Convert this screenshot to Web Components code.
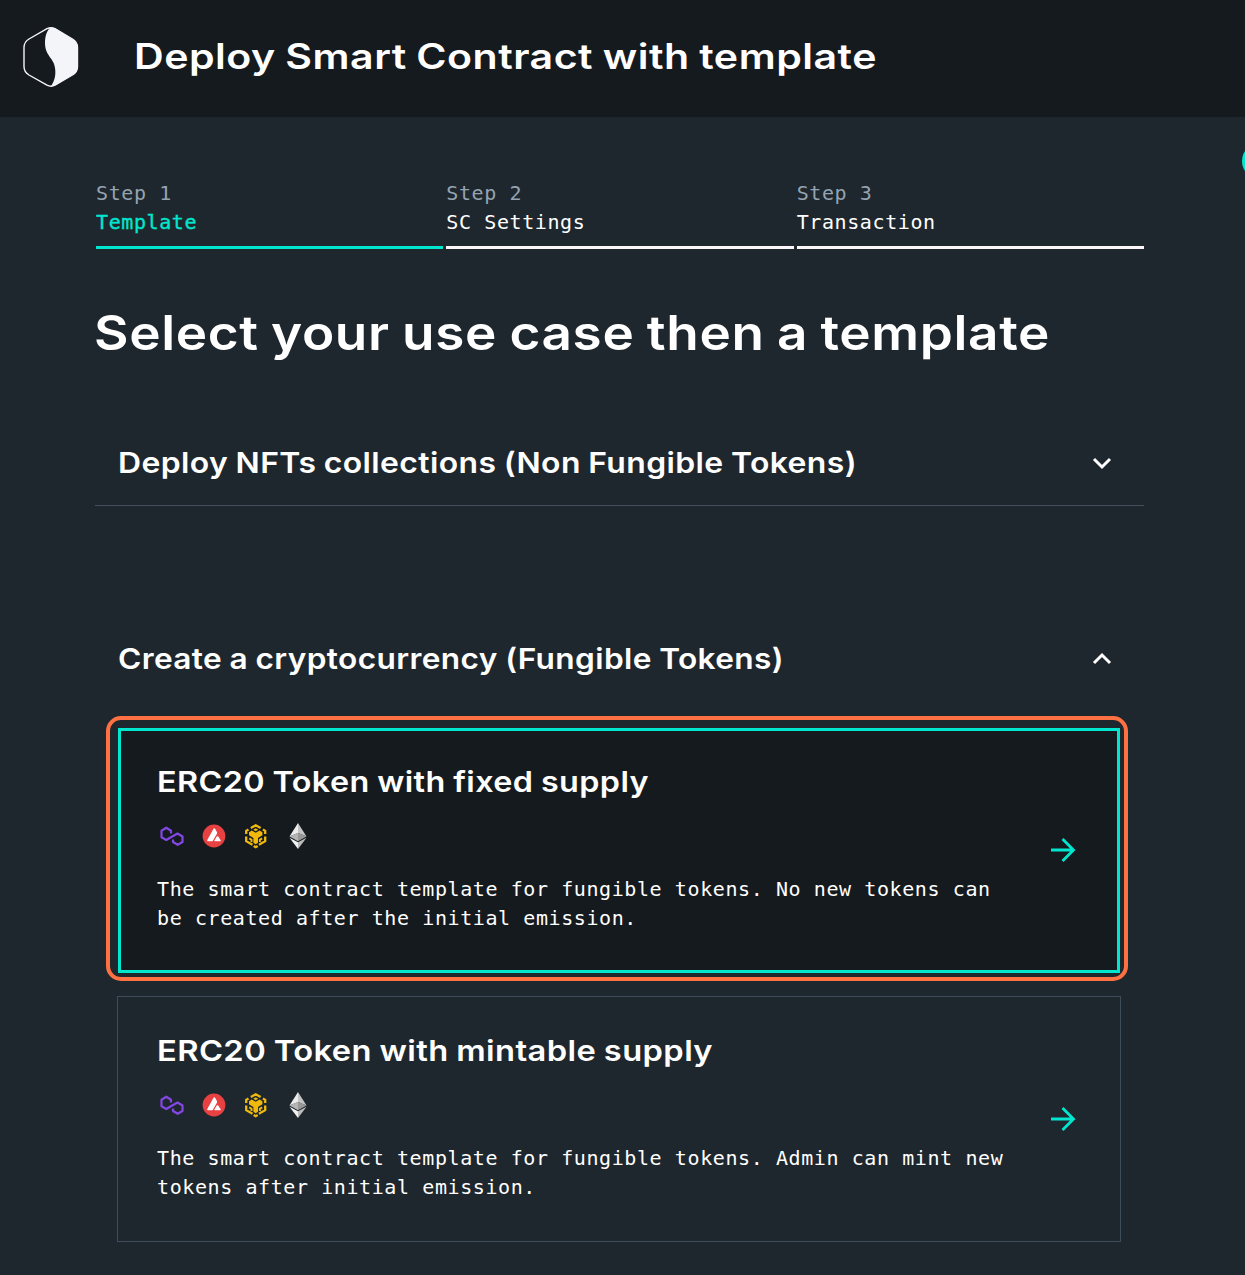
<!DOCTYPE html>
<html lang="en">
<head>
<meta charset="utf-8">
<title>Deploy Smart Contract with template</title>
<style>
html,body{margin:0;height:100%;overflow:hidden;background:#1f272e}
body{color:#fff;font-family:"DejaVu Sans Mono",monospace;font-size:20px}
</style>
</head>
<body>
<deploy-app></deploy-app>
<script>
const define=(name,html,init)=>customElements.define(name,class extends HTMLElement{
  connectedCallback(){
    if(this.shadowRoot)return;
    const t=document.createElement('template');
    t.innerHTML=html(this);
    this.attachShadow({mode:'open'}).append(t.content.cloneNode(true));
    if(init)init(this);
  }
});

/* Heading whose letters are widened so the line spans a given measure. */
define('fit-title',e=>`<style>
:host{display:block;font:600 ${e.getAttribute('size')}px/1.25 Inter,"Liberation Sans",sans-serif;white-space:nowrap;color:#fff}
span{display:inline-block;transform-origin:0 50%;letter-spacing:.012em;word-spacing:-.03em}
</style><span>${e.getAttribute('text')}</span>`,e=>{
  const s=e.shadowRoot.querySelector('span');
  const k=Number(e.getAttribute('measure'))/s.getBoundingClientRect().width;
  s.style.transform='scaleX('+k.toFixed(4)+')';
});

define('brand-mark',()=>`<style>:host{display:block;width:56px;height:62px}svg{display:block}</style>
<svg width="56" height="62" viewBox="0 0 56 62" fill="none">
<path d="M24 2.600 6 13Q1 16 1 21.500V40.500Q1 46 6 49L24 59.200Q28 61.300 32 59.200L49.500 49Q54.500 46 54.500 40.500V21.500Q54.500 16 49.500 13L32 2.600Q28 .8 24 2.600Z" stroke="#f4f5f8" stroke-width="1.400"/>
<path d="M27 2Q30 1.300 33 3L49.500 13Q55 16 55 21.500V40.500Q55 46 49.500 49L32 59.500Q30 60.500 28 60.200C32 54.500 33 48 32 42C31 32 22 30 22 17C22 10 24 4.500 27 2Z" fill="#f4f5f8"/></svg>`);

define('app-bar',()=>`<style>
:host{display:flex;align-items:flex-start;box-sizing:border-box;height:117px;padding:26px 23px 0;gap:55px;background:#151a1e}
fit-title{margin-top:9px}
</style><brand-mark></brand-mark><fit-title size="35" measure="743" text="Deploy Smart Contract with template"></fit-title>`);

define('step-tab',e=>`<style>
:host{display:block;flex:1;border-bottom:3px solid #fcf5fa;padding-bottom:9px;line-height:29px;letter-spacing:.6px}
:host([active]){border-color:#00e6cf}
.n{color:#94a3b1;padding-top:1px}:host([active]) .l{color:#00e6cf;-webkit-text-stroke:.35px #00e6cf}
</style><div class="n">${e.getAttribute('step')}</div><div class="l"><slot></slot></div>`);

define('step-bar',()=>`<style>:host{display:flex;gap:3px;margin-left:1px}</style>
<step-tab active step="Step 1">Template</step-tab><step-tab step="Step 2">SC Settings</step-tab><step-tab step="Step 3">Transaction</step-tab>`);

define('accordion-head',e=>`<style>
:host{display:flex;align-items:center;justify-content:space-between;box-sizing:border-box;height:84px;padding:0 32px 0 23px;border-bottom:1px solid transparent}
:host([line]){border-color:#43505c}
svg{display:block;margin-bottom:2px}
:host([open]) svg{transform:scaleY(-1)}
</style><fit-title size="29" measure="${e.getAttribute('measure')}" text="${e.getAttribute('text')}"></fit-title>
<svg width="20" height="14" viewBox="0 0 20 14"><path d="M2 3 10 11 18 3" fill="none" stroke="#fff" stroke-width="3"/></svg>`);

define('chain-icons',()=>`<style>:host{display:flex;gap:14px;height:28px}svg{display:block;width:28px;height:28px}</style>
<svg viewBox="0 0 28 28" fill="none" stroke="#8247e5" stroke-width="2.200" stroke-linejoin="round"><path d="M12 15.700 8.300 18 3.500 15.300V8.700L8.300 5.700 13 8.700V11.500M12 15.700 19.500 11.500 24.500 14.500V20L19.700 22.800 15 20V17.500"/></svg>
<svg viewBox="0 0 28 28"><circle cx="14" cy="14" r="11.400" fill="#e84142"/><path d="M13.500 6.800Q14.300 5.700 15.100 6.800L17 10.200Q17.300 11 16.900 11.700L12.900 18.700Q12.500 19.300 11.700 19.300H8Q6.700 19.200 7.300 18ZM16.800 14.500Q17.500 13.600 18.200 14.500L20.700 18.200Q21.200 19.200 20.100 19.300H15.200Q13.900 19.200 14.500 18.200Z" fill="#fff"/></svg>
<svg viewBox="0 0 28 28" fill="none" stroke="#f0b90b"><path d="M8.800 6 13.700 3.300 18.600 6M4.200 12V8.800L6.500 7.400M20.900 7.400 23.200 8.800V12M4.200 14.500V19.200L10.500 22.800M16.900 22.800 23.200 19.200V14.500M11.700 24 13.700 25.200 15.700 24" stroke-width="2.300"/><path d="M7.300 16.300 9.500 17.700V20M20.100 16.300 17.900 17.700V20" stroke-width="2"/><path d="M7 10.200 9.800 8.600 13.700 10.800 17.600 8.600 20.400 10.200V13.300L16 16V20.800L13.700 22.200 11.400 20.800V16L7 13.300ZM11.200 7.800 13.700 6.300 16.200 7.800 13.700 9.200Z" fill="#f0b90b" stroke="none"/></svg>
<svg viewBox="0 0 28 28"><path d="M14 1 5.500 14.500 14 11Z" fill="#ececec"/><path d="M14 1V11L22.500 14.500Z" fill="#c4c4c4"/><path d="M5.500 14.500 14 10.700V19.300Z" fill="#b4b4b4"/><path d="M22.500 14.500 14 10.700V19.300Z" fill="#989898"/><path d="M5.500 15.800 14 20.200V27Z" fill="#f0f0f0"/><path d="M22.500 15.800 14 20.200V27Z" fill="#bcbcbc"/></svg>`);

define('template-card',e=>`<style>
:host{display:block}
.card{box-sizing:border-box;height:246px;border:1px solid #3e4b58;padding:36px 43px 0 39px;display:flex;align-items:flex-start;justify-content:space-between}
:host([selected]) .ring{border:4px solid #ff7142;border-radius:15px;padding:8px 4px 4px 8px}
:host([selected]) .card{height:245px;border:3px solid #00e6cf;background:#151a1e;padding:33px 40px 0 36px}
.info{display:flex;flex-direction:column}
chain-icons{margin:22px 0 0 1px}
p{margin:25px 0 0;line-height:29px;letter-spacing:.59px;white-space:nowrap}
.arrow{display:block;margin-top:72px}
</style><div class="ring"><div class="card"><div class="info">
<fit-title size="29" measure="${e.getAttribute('measure')}" text="${e.getAttribute('text')}"></fit-title>
<chain-icons></chain-icons><p><slot></slot></p></div>
<svg class="arrow" width="28" height="28" viewBox="0 0 28 28"><path d="M2 14H25M13.500 3 24.500 14 13.500 25" fill="none" stroke="#00e6cf" stroke-width="2.800"/></svg>
</div></div>`);

define('help-bubble',()=>`<style>:host{position:absolute;left:1242px;top:143px;width:36px;height:36px;border-radius:50%;background:#00e6cf}</style>`);

define('deploy-app',()=>`<style>
:host{display:block;position:relative;height:1275px;overflow:hidden;background:#1f272e}
main{display:flex;flex-direction:column;padding:61px 101px 0 95px}
.h{margin:54px 0 0 -1px}
.a{margin-top:59px}
.b{margin-top:112px}
.one{margin:14px 16px 0 11px}
.two{margin:15px 23px 0 22px}
</style><app-bar></app-bar><main><step-bar></step-bar>
<fit-title class="h" size="48" measure="956" text="Select your use case then a template"></fit-title>
<accordion-head class="a" line measure="739" text="Deploy NFTs collections (Non Fungible Tokens)"></accordion-head>
<accordion-head class="b" open measure="666" text="Create a cryptocurrency (Fungible Tokens)"></accordion-head>
<template-card class="one" selected measure="492" text="ERC20 Token with fixed supply">The smart contract template for fungible tokens. No new tokens can<br>be created after the initial emission.</template-card>
<template-card class="two" measure="556" text="ERC20 Token with mintable supply">The smart contract template for fungible tokens. Admin can mint new<br>tokens after initial emission.</template-card>
</main><help-bubble></help-bubble>`);
</script>
</body>
</html>
